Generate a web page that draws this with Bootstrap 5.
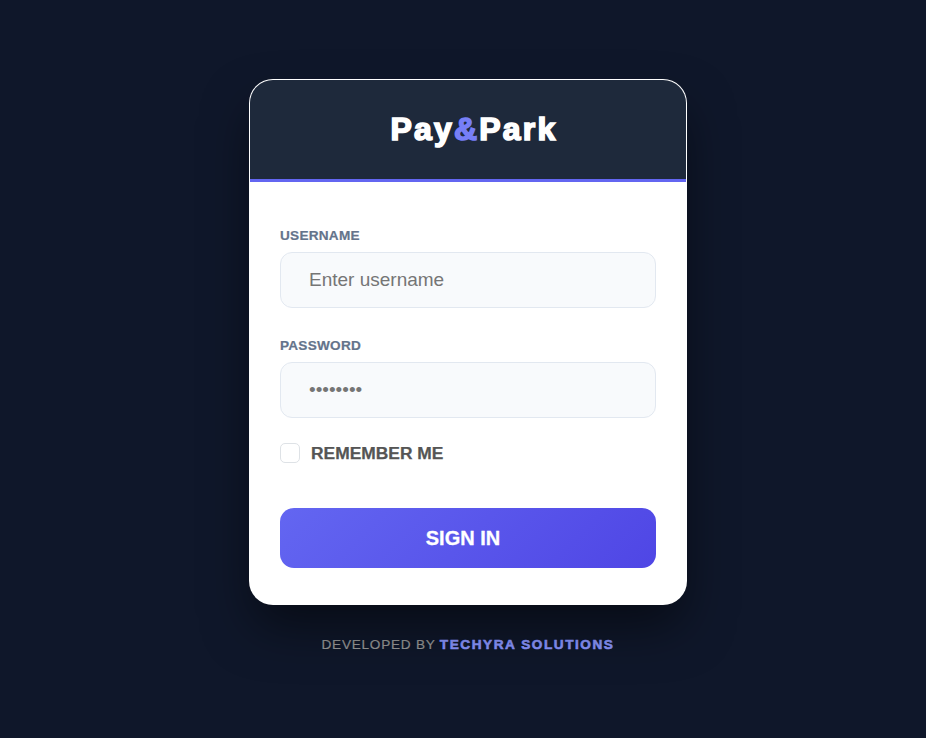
<!DOCTYPE html>
<html lang="en">
<head>
<meta charset="utf-8">
<title>Pay&amp;Park</title>
<link href="https://cdn.jsdelivr.net/npm/bootstrap@5.3.0/dist/css/bootstrap.min.css" rel="stylesheet">
<style>
html,body{height:100%;}
body{background:#0f172a;font-family:"Liberation Sans",Arial,sans-serif;}
.page-wrap{min-height:738px;padding:79px 0 0 10px;}
.login-box{width:438px;}
.login-card{width:438px;height:526px;border-radius:24px;border:0;overflow:hidden;background:#fff;box-shadow:0 25px 50px -5px rgba(0,0,0,.5);}
.login-head{background:#1e293b;height:102px;margin:1px 1px 0;border-radius:23px 23px 0 0;border-bottom:3px solid #6366f1;padding:29px 0 0 12px;text-align:center;}
.brand{font-family:"Liberation Sans",Arial,sans-serif;font-weight:900;font-size:32px;line-height:40px;color:#fff;letter-spacing:2.2px;margin:0;-webkit-text-stroke:1.6px currentColor;}
.brand span{color:#777ff6;}
.login-body{padding:45px 31px 0;}
.field-label{display:block;font-size:13.6px;line-height:17px;font-weight:700;color:#64748b;letter-spacing:.25px;margin-bottom:8px;text-transform:uppercase;-webkit-text-stroke:.2px currentColor;}
.field-input.form-control{height:56px;border-radius:12px;border:1px solid #e2e8f0;background:#f8fafc;padding:0 28px;font-size:19px;font-family:"Liberation Sans",Arial,sans-serif;color:#333;}
.field-input.form-control::placeholder{color:#757575;opacity:1;}
.field-gap{margin-bottom:29px;}
.rem-row{margin-top:25px;height:20px;gap:11px;}
.rem-check.form-check-input{width:20px;height:20px;margin:0;border-radius:5px;border:1px solid #dee2e6;flex:none;}
.rem-label{font-size:17.4px;line-height:20px;font-weight:700;color:#555;margin:0;-webkit-text-stroke:.25px currentColor;}
.sign-btn.btn{display:block;width:100%;height:60px;margin-top:45px;border:0;border-radius:14px;padding:0 10px 0 0;background:linear-gradient(135deg,#6366f1,#4f46e5);color:#fff;font-size:20px;font-weight:700;-webkit-text-stroke:.3px currentColor;}
.credit{margin-top:31px;text-align:center;font-size:13.6px;line-height:17px;letter-spacing:.75px;color:#979797;-webkit-text-stroke:.2px currentColor;}
.credit b{color:#8b96ff;font-weight:900;letter-spacing:1.55px;-webkit-text-stroke:.6px currentColor;}
</style>
</head>
<body>
<div class="page-wrap d-flex justify-content-center align-items-start">
  <div class="login-box">
    <div class="card login-card">
      <div class="login-head"><h1 class="brand">Pay<span>&amp;</span>Park</h1></div>
      <form class="login-body">
        <div class="field-gap">
          <label class="field-label" for="u">Username</label>
          <input id="u" class="form-control field-input" type="text" placeholder="Enter username">
        </div>
        <div>
          <label class="field-label" for="p">Password</label>
          <input id="p" class="form-control field-input" type="password" placeholder="••••••••">
        </div>
        <div class="d-flex align-items-center rem-row">
          <input id="r" class="form-check-input rem-check" type="checkbox">
          <label class="rem-label" for="r">REMEMBER ME</label>
        </div>
        <button type="button" class="btn sign-btn">SIGN IN</button>
      </form>
    </div>
    <div class="credit">DEVELOPED BY <b>TECHYRA SOLUTIONS</b></div>
  </div>
</div>
<script src="https://cdn.jsdelivr.net/npm/bootstrap@5.3.0/dist/js/bootstrap.bundle.min.js"></script>
</body>
</html>
